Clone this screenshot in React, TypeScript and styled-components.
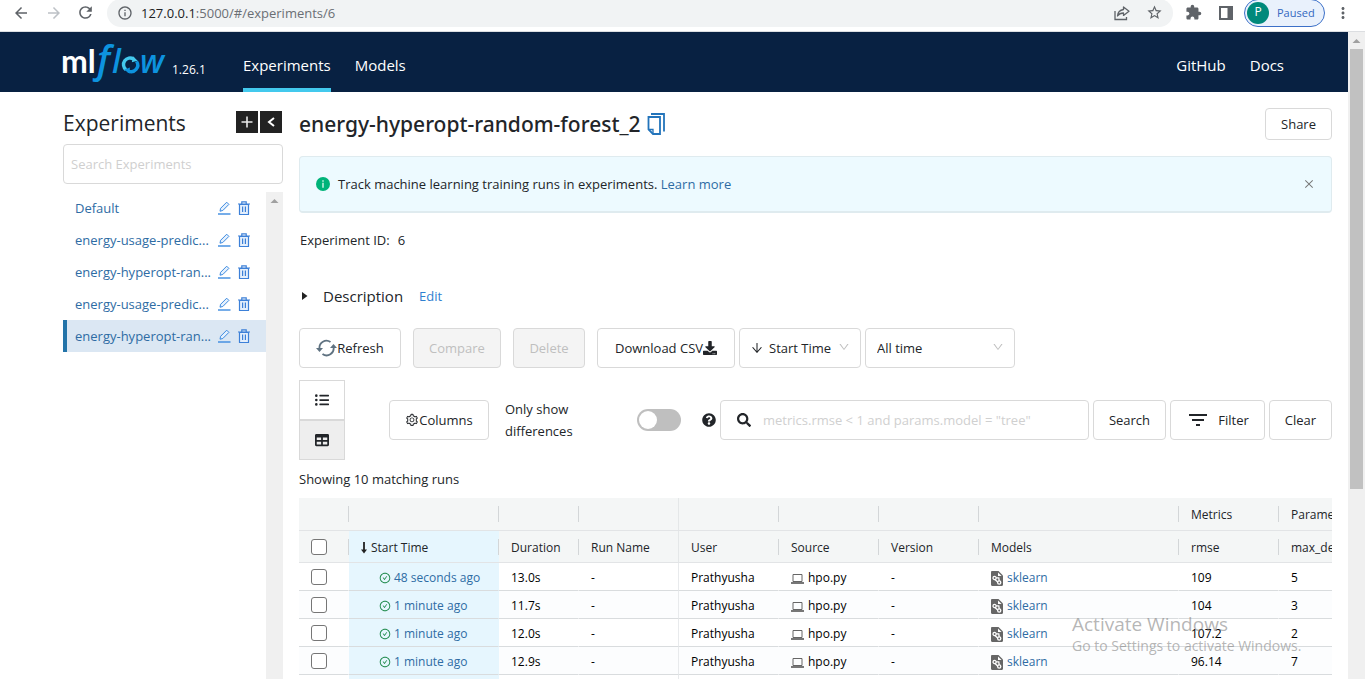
import React from "react";
import styled, { createGlobalStyle, css } from "styled-components";
import {
  MdArrowBack,
  MdArrowForward,
  MdRefresh,
  MdInfoOutline,
  MdStarBorder,
  MdExtension,
  MdMoreVert,
  MdFilterList,
} from "react-icons/md";
import {
  FaDownload,
  FaListUl,
  FaTable,
  FaSearch,
  FaQuestionCircle,
} from "react-icons/fa";
import {
  AiOutlineSetting,
  AiOutlineArrowDown,
  AiOutlineDown,
  AiOutlineClose,
  AiOutlineCheckCircle,
} from "react-icons/ai";

const color = {
  navy: "#082142",
  cyan: "#43c9ed",
  link: "#2e6ca4",
  action: "#2f80d0",
  text: "#222529",
  border: "#d9d9d9",
  muted: "#bfbfbf",
  head: "#f4f6f6",
};

const GlobalStyle = createGlobalStyle`
  *, *::before, *::after { box-sizing: border-box; }
  body { margin: 0; background: #fff; }
  body, button, input, select {
    font-family: "Open Sans", "Noto Sans", sans-serif;
    font-size: 13px;
    line-height: 22px;
    color: ${color.text};
  }
  a { text-decoration: none; color: ${color.link}; }
  h1, h2 { margin: 0; }
  svg { display: block; flex: none; }
`;

const Window = styled.div`
  display: flex;
  flex-direction: column;
  height: 100vh;
  overflow: hidden;
  position: relative;
`;

/* Browser chrome */

const BrowserBar = styled.header`
  display: flex;
  align-items: center;
  flex: none;
  height: 32px;
  padding: 0 13px 6px 12px;
  overflow: hidden;
  border-bottom: 1px solid #dcdee1;
  color: #5f6368;
`;

const BarButton = styled.button<{ $dim?: boolean; $gap: number }>`
  display: flex;
  padding: 0;
  border: 0;
  background: none;
  color: ${(p) => (p.$dim ? "#bdc1c6" : "#5f6368")};
  margin-right: ${(p) => p.$gap}px;
`;

const AddressBar = styled.div`
  display: flex;
  align-items: center;
  flex: 1;
  height: 28px;
  padding: 0 8px 0 10px;
  margin-right: 12px;
  border-radius: 14px;
  background: #f1f3f4;
`;

const Address = styled.span`
  flex: 1;
  margin-left: 8px;
  font-size: 13px;
  color: #6b6f74;
  b {
    font-weight: 400;
    color: #202124;
  }
`;

const Profile = styled.button`
  display: flex;
  align-items: center;
  flex: none;
  gap: 8px;
  width: 81px;
  height: 28px;
  padding: 0 2px;
  margin-right: 9px;
  border: 1px solid #3c70c8;
  border-radius: 14px;
  background: #e9f1fc;
  color: #3367c0;
  font-size: 11px;
`;

const Avatar = styled.span`
  width: 22px;
  height: 22px;
  border-radius: 50%;
  background: #00897b;
  color: #fff;
  font-size: 12px;
  line-height: 20px;
  text-align: center;
`;

/* Scroll bars */

const Rail = styled.div`
  flex: none;
  width: 17px;
  background: #f0f0f0;
  display: flex;
  flex-direction: column;
  align-items: center;
`;

const RailArrow = styled.svg`
  width: 17px;
  height: 17px;
  fill: #a0a0a0;
`;

const Thumb = styled.div`
  width: 13px;
  height: 68%;
  background: #c1c1c1;
`;

/* Page */

const Viewport = styled.div`
  display: flex;
  flex: 1;
  min-height: 0;
`;

const Page = styled.div`
  display: flex;
  flex-direction: column;
  flex: 1;
  min-width: 0;
`;

const NavBar = styled.nav`
  display: flex;
  flex: none;
  height: 60px;
  padding: 0 64px 0 61px;
  background: ${color.navy};
  color: #fff;
`;

const Version = styled.span`
  width: 31px;
  margin: 28px 40px 0 4px;
  font-size: 12px;
  line-height: 20px;
  white-space: nowrap;
`;

const NavLink = styled.a<{ $active?: boolean }>`
  display: flex;
  align-items: center;
  height: 60px;
  padding-top: 10px;
  margin-right: 24px;
  font-size: 15px;
  color: #fff;
  border-bottom: 4px solid ${(p) => (p.$active ? color.cyan : "transparent")};
  &:last-child {
    margin-right: 0;
  }
`;

const Spacer = styled.div`
  flex: 1;
`;

const Body = styled.div`
  display: flex;
  flex: 1;
  min-height: 0;
  padding: 0 16px 0 63px;
`;

const Sidebar = styled.aside`
  display: flex;
  flex-direction: column;
  flex: none;
  width: 220px;
  margin-right: 16px;
  padding-top: 16px;
`;

const SideHead = styled.div`
  display: flex;
  align-items: center;
  gap: 2px;
  height: 30px;
  margin: 0 1px 6px 0;
`;

const SideTitle = styled.h2`
  flex: 1;
  font-size: 21px;
  font-weight: 500;
  line-height: 30px;
`;

const SquareButton = styled.button`
  display: flex;
  align-items: center;
  justify-content: center;
  width: 22px;
  height: 22px;
  margin-bottom: 2px;
  padding: 0;
  border: 0;
  background: #222;
`;

const SideSearch = styled.input`
  width: 100%;
  height: 40px;
  padding: 0 7px;
  border: 1px solid ${color.border};
  border-radius: 4px;
  &::placeholder {
    color: #cfcfcf;
  }
`;

const SideListArea = styled.div`
  display: flex;
  flex: 1;
  min-height: 0;
  margin-top: 8px;
`;

const SideList = styled.ul`
  flex: 1;
  min-width: 0;
  margin: 0;
  padding: 0;
  list-style: none;
`;

const SideItem = styled.li<{ $active?: boolean }>`
  display: flex;
  align-items: center;
  height: 32px;
  padding: 0 15px 0 8px;
  border-left: 4px solid ${(p) => (p.$active ? "#2374a9" : "transparent")};
  background: ${(p) => (p.$active ? "#dbe7f3" : "transparent")};
`;

const SideName = styled.a`
  flex: 1;
  white-space: nowrap;
`;

const IconButton = styled.button`
  display: flex;
  flex: none;
  padding: 0;
  margin-left: 6px;
  border: 0;
  background: none;
  color: ${color.text};
`;

const Main = styled.main`
  flex: 1;
  min-width: 0;
  padding-top: 16px;
`;

const TitleRow = styled.div`
  display: flex;
  align-items: center;
  height: 32px;
  margin-bottom: 16px;
`;

const Title = styled.h1`
  font-family: "Noto Sans", "Open Sans", sans-serif;
  font-size: 21px;
  font-weight: 500;
  line-height: 32px;
  white-space: nowrap;
`;

const Button = styled.button<{ $width?: number; $small?: boolean }>`
  display: flex;
  align-items: center;
  justify-content: center;
  flex: none;
  width: ${(p) => p.$width}px;
  height: ${(p) => (p.$small ? 32 : 40)}px;
  padding: 0;
  border: 1px solid ${color.border};
  border-radius: 4px;
  background: #fff;
  white-space: nowrap;
  &:disabled {
    background: #f4f4f4;
    color: ${color.muted};
  }
`;

const Alert = styled.div`
  display: flex;
  align-items: center;
  gap: 8px;
  height: 57px;
  padding: 0 16px;
  border: 1px solid #dfebef;
  border-bottom-width: 2px;
  border-radius: 4px;
  background: #edfaff;
`;

const AlertText = styled.span`
  flex: 1;
`;

const Details = styled.div`
  display: flex;
  gap: 8px;
  height: 22px;
  margin: 16px 0 0 1px;
`;

const DescriptionRow = styled.div`
  display: flex;
  align-items: center;
  height: 24px;
  margin: 33px 0 20px 2px;
  a {
    margin-left: 16px;
    color: ${color.action};
  }
`;

const DescriptionTitle = styled.span`
  margin-left: 14px;
  font-size: 15px;
`;

const Toolbar = styled.div`
  display: flex;
  align-items: center;
  margin-bottom: 12px;
`;

const FilterBar = styled(Toolbar)`
  margin-bottom: 8px;
`;

const ActionGroup = styled.div`
  display: flex;
  gap: 12px;
  margin-right: 4px;
`;

const SelectBox = styled.label<{ $width: number }>`
  position: relative;
  display: flex;
  width: ${(p) => p.$width}px;
  margin-right: 4px;
`;

const Select = styled.select<{ $indent: number }>`
  appearance: none;
  width: 100%;
  height: 40px;
  padding: 0 24px 0 ${(p) => p.$indent}px;
  border: 1px solid ${color.border};
  border-radius: 4px;
  background: #fff;
`;

const SelectIcon = styled.span<{ $left?: boolean }>`
  position: absolute;
  top: 13px;
  ${(p) => (p.$left ? css`left: 11px; color: ${color.text};` : css`right: 11px; color: ${color.muted};`)}
  pointer-events: none;
`;

const ViewSwitch = styled.div`
  display: flex;
  flex-direction: column;
  margin-right: 44px;
`;

const ViewButton = styled.button<{ $active?: boolean }>`
  display: flex;
  align-items: center;
  justify-content: center;
  width: 46px;
  height: 40px;
  padding: 0;
  border: 1px solid ${color.border};
  background: ${(p) => (p.$active ? "#eeeeee" : "#fff")};
`;

const DiffLabel = styled.label`
  flex: none;
  width: 148px;
  padding: 0 48px 0 16px;
`;

const Switch = styled.input`
  appearance: none;
  flex: none;
  width: 44px;
  height: 22px;
  margin: 0 21px 0 0;
  padding: 2px;
  border-radius: 11px;
  background: #bfbfbf;
  &::before {
    content: "";
    display: block;
    width: 18px;
    height: 18px;
    border-radius: 50%;
    background: #fff;
  }
`;

const QueryBox = styled.label`
  display: flex;
  align-items: center;
  gap: 12px;
  flex: 1;
  min-width: 0;
  height: 40px;
  margin: 0 4px;
  padding: 0 16px;
  border: 1px solid ${color.border};
  border-radius: 4px;
`;

const QueryInput = styled.input`
  flex: 1;
  min-width: 0;
  padding: 0;
  border: 0;
  outline: 0;
  &::placeholder {
    color: #d0d0d0;
  }
`;

const ButtonGroup = styled.div`
  display: flex;
  gap: 4px;
`;

const Count = styled.p`
  margin: 0 0 8px;
`;

/* Runs table */

const TableFrame = styled.div`
  overflow: hidden;
`;

const Table = styled.table`
  width: 1080px;
  min-width: 100%;
  table-layout: fixed;
  border-collapse: separate;
  border-spacing: 0;
  font-size: 12px;
  line-height: 18px;
  color: #000;
`;

const HeadCell = styled.th<{ $sorted?: boolean; $edge?: boolean }>`
  height: 32px;
  padding: 2px 12px 0;
  border-bottom: 1px solid #e2e4e6;
  text-align: left;
  font-size: 12px;
  font-weight: 500;
  white-space: nowrap;
  color: ${color.text};
  background: ${(p) =>
      p.$edge
        ? "linear-gradient(#e4e7e8, #e4e7e8) no-repeat right center / 1px 100%"
        : "linear-gradient(#d3d6d8, #d3d6d8) no-repeat right center / 1px 16px"}
    ${(p) => (p.$sorted ? "#e6f6fe" : color.head)};
`;

const GroupRow = styled.tr`
  th {
    height: 33px;
  }
`;

const Cell = styled.td<{ $sorted?: boolean; $edge?: boolean }>`
  height: 28px;
  padding: 2px 12px 0;
  border-bottom: 1px solid #d9dcde;
  border-right: 1px solid ${(p) => (p.$edge ? "#e8eaec" : "transparent")};
  white-space: nowrap;
  ${(p) =>
    p.$sorted &&
    css`
      background: #e6f6fe;
      border-right-color: #e6f6fe;
      padding-left: 30px;
    `}
`;

const Row = styled.tr`
  &:nth-child(even) {
    background: #fcfdfe;
  }
`;

const Inline = styled.span<{ $gap: number }>`
  display: flex;
  align-items: center;
  gap: ${(p) => p.$gap}px;
`;

const Tick = styled.input`
  appearance: none;
  display: block;
  width: 16px;
  height: 16px;
  margin: 0 0 2px;
  border: 1px solid #767676;
  border-radius: 3px;
  background: #fff;
`;

/* System notice laid over the page */

const Watermark = styled.div`
  position: absolute;
  right: 57px;
  bottom: 23px;
  width: 236px;
  color: rgba(120, 120, 120, 0.55);
  pointer-events: none;
  white-space: nowrap;
`;

const WatermarkTitle = styled.div`
  font-size: 19px;
  line-height: 24px;
`;

const WatermarkText = styled.div`
  font-size: 14px;
  line-height: 20px;
`;

function Logo() {
  return (
    <svg width="107" height="60" viewBox="-2 0 107 60" role="img" aria-label="mlflow">
      <text x="-2" y="41" fill="#fff" fontFamily="Lato" fontWeight="700" fontSize="32">ml</text>
      <g fill="#0d93df" fontFamily="Open Sans" fontStyle="italic" fontWeight="600">
        <text x="34" y="41" fontSize="38">f</text>
        <text x="49" y="41" fontSize="32">l</text>
        <text x="77" y="41" fontSize="32">w</text>
      </g>
      <g fill="none" strokeWidth="3.4">
        <path d="M63 37.600A6.500 6.500 0 0 1 70.500 27" stroke="#43c9ed" />
        <path d="M73.500 29.400A6.500 6.500 0 0 1 65.200 38.900" stroke="#0d93df" />
      </g>
      <path d="M70 24.200l4.600 4.600-5.800 1.400z" fill="#43c9ed" />
      <path d="M66.500 41.600l-5.400-3.800 5.800-2.200z" fill="#0d93df" />
    </svg>
  );
}

function ShareIcon() {
  return (
    <svg width="16" height="16" viewBox="0 0 16 16" fill="none" stroke="#5f6368" strokeWidth="1.3">
      <path d="M1 6v8.500h11.500V12" />
      <path d="M9.500 2l5.500 4.200-5.500 4.200V8C6.500 8 4.800 9 3.500 11c.3-3.500 2.500-6 6-6.500z" strokeLinejoin="round" />
    </svg>
  );
}

function PanelIcon() {
  return (
    <svg width="14" height="14" viewBox="0 0 14 14" fill="#5f6368">
      <path fillRule="evenodd" d="M0 0h14v14H0zM2 2v10h6.500V2z" />
    </svg>
  );
}

function PencilIcon() {
  return (
    <svg width="14" height="14" viewBox="0 0 14 14" fill="none" stroke="#3c8ae0">
      <path d="M3 10.200l.6-2.900L9.700 1.200l2.200 2.200-6.100 6.100z" fill="#e4f0fd" strokeLinejoin="round" />
      <path d="M1 13h12.500" strokeWidth="1.400" />
    </svg>
  );
}

function TrashIcon() {
  return (
    <svg width="14" height="14" viewBox="0 0 14 14" fill="none" stroke="#3c80d8" strokeWidth="1.200">
      <path d="M2.500 3.500h9v10h-9z" fill="#e4effc" strokeLinejoin="round" />
      <path d="M1 3h12M4.800 2.800V.8h4.400v2M5.600 5.500v5.500M8.400 5.500v5.500" />
    </svg>
  );
}

function CopyIcon() {
  return (
    <svg width="18" height="22" viewBox="0 0 18 22" fill="none" stroke="#2374bb" strokeWidth="1.800">
      <path d="M1.500 4h11.500v17H6l-4.500-4.500z" />
      <path d="M1.500 16.500H6V21" strokeWidth="1.300" />
      <path d="M4 1h13v17.500" />
    </svg>
  );
}

function InfoIcon() {
  return (
    <svg width="14" height="14" viewBox="0 0 14 14">
      <circle cx="7" cy="7" r="7" fill="#00b379" />
      <path d="M6.300 3.200h1.400v1.500H6.300zM6.300 5.800h1.400v5H6.300z" fill="#d8f5ea" />
    </svg>
  );
}

function RefreshIcon() {
  return (
    <svg width="21" height="18" viewBox="0 0 21 18" fill="none" stroke="#5f7281" strokeWidth="1.800">
      <path d="M3.500 9.500A7 7 0 0 1 14.500 3" />
      <path d="M17.500 8A7 7 0 0 1 6.500 15" />
      <path d="M0 9h7l-3.500 4zM14 9h7l-3.500-4z" fill="#5f7281" stroke="none" />
    </svg>
  );
}

function SortIcon() {
  return (
    <svg width="6" height="12" viewBox="0 0 6 12" fill="#222">
      <path d="M2.100 0h1.800v7.500H6L3 11.500 0 7.500h2.100z" />
    </svg>
  );
}

function LaptopIcon() {
  return (
    <svg width="13" height="14" viewBox="0 0 13 14">
      <path d="M2 3.500h9v7H2z" fill="none" stroke="#666" />
      <path d="M0 11h13v1.400c0 .4-.2.600-.6.600H.6c-.4 0-.6-.2-.6-.6z" fill="#777" />
    </svg>
  );
}

function ModelIcon() {
  return (
    <svg width="12" height="17" viewBox="0 0 12 17">
      <path d="M1.200 2H7.500L12 6.500v9.300c0 .7-.5 1.200-1.200 1.200H1.200C.5 17 0 16.500 0 15.800V3.200C0 2.500.500 2 1.200 2z" fill="#666" />
      <path d="M7 3.500l3.600 3.600H7z" fill="#fff" />
      <g fill="none" stroke="#fff" strokeWidth="1.300">
        <circle cx="3.600" cy="9" r="1.600" />
        <circle cx="8.200" cy="13.500" r="1.600" />
        <path d="M5.200 8.800h2.600l.4 3M4 10.600l2.600 2.400" />
      </g>
    </svg>
  );
}

const experiments = [
  "Default",
  "energy-usage-predic...",
  "energy-hyperopt-ran...",
  "energy-usage-predic...",
  "energy-hyperopt-ran...",
];

const columnWidths = [50, 150, 80, 100, 100, 100, 100, 200, 100, 100];

const runs = [
  { start: "48 seconds ago", duration: "13.0s", rmse: "109", depth: "5" },
  { start: "1 minute ago", duration: "11.7s", rmse: "104", depth: "3" },
  { start: "1 minute ago", duration: "12.0s", rmse: "107.2", depth: "2" },
  { start: "1 minute ago", duration: "12.9s", rmse: "96.14", depth: "7" },
];

function Browser() {
  return (
    <BrowserBar>
      <BarButton aria-label="Back" $gap={15}><MdArrowBack size={18} /></BarButton>
      <BarButton aria-label="Forward" $dim $gap={13}><MdArrowForward size={18} /></BarButton>
      <BarButton aria-label="Reload" $gap={12}><MdRefresh size={19} /></BarButton>
      <AddressBar>
        <MdInfoOutline size={16} />
        <Address><b>127.0.0.1</b>:5000/#/experiments/6</Address>
        <BarButton aria-label="Share page" $gap={16}><ShareIcon /></BarButton>
        <BarButton aria-label="Bookmark" $gap={2}><MdStarBorder size={17} /></BarButton>
      </AddressBar>
      <BarButton aria-label="Extensions" $gap={17}><MdExtension size={17} /></BarButton>
      <BarButton aria-label="Side panel" $gap={11}><PanelIcon /></BarButton>
      <Profile><Avatar>P</Avatar>Paused</Profile>
      <BarButton aria-label="Menu" $gap={0}><MdMoreVert size={18} /></BarButton>
    </BrowserBar>
  );
}

function ExperimentSidebar() {
  return (
    <Sidebar>
      <SideHead>
        <SideTitle>Experiments</SideTitle>
        <SquareButton aria-label="New experiment">
          <svg width="12" height="12" viewBox="0 0 12 12" stroke="#e8e8e8" strokeWidth="1.600"><path d="M6 .5v11M.5 6h11" /></svg>
        </SquareButton>
        <SquareButton aria-label="Collapse list">
          <svg width="8" height="10" viewBox="0 0 8 10" fill="none" stroke="#fff" strokeWidth="2"><path d="M7 1L2 5l5 4" /></svg>
        </SquareButton>
      </SideHead>
      <SideSearch aria-label="Search Experiments" placeholder="Search Experiments" />
      <SideListArea>
        <SideList>
          {experiments.map((name, i) => (
            <SideItem key={i} $active={i === 4}>
              <SideName href="#">{name}</SideName>
              <IconButton aria-label="Rename"><PencilIcon /></IconButton>
              <IconButton aria-label="Delete"><TrashIcon /></IconButton>
            </SideItem>
          ))}
        </SideList>
        <Rail>
          <RailArrow viewBox="0 0 17 17"><path d="M4.500 11l4-4 4 4z" /></RailArrow>
        </Rail>
      </SideListArea>
    </Sidebar>
  );
}

function RunsTable() {
  return (
    <TableFrame>
      <Table>
        <colgroup>
          {columnWidths.map((w, i) => <col key={i} width={w} />)}
        </colgroup>
        <thead>
          <GroupRow>
            {["", "", "", "", "", "", "", "", "Metrics", "Parameters"].map((label, i) => (
              <HeadCell key={i} $edge={i === 3}>{label}</HeadCell>
            ))}
          </GroupRow>
          <tr>
            <HeadCell><Tick type="checkbox" aria-label="Select all runs" /></HeadCell>
            <HeadCell $sorted><Inline $gap={4}><SortIcon />Start Time</Inline></HeadCell>
            <HeadCell>Duration</HeadCell>
            <HeadCell $edge>Run Name</HeadCell>
            <HeadCell>User</HeadCell>
            <HeadCell>Source</HeadCell>
            <HeadCell>Version</HeadCell>
            <HeadCell>Models</HeadCell>
            <HeadCell>rmse</HeadCell>
            <HeadCell>max_depth</HeadCell>
          </tr>
        </thead>
        <tbody>
          {runs.map((run, i) => (
            <Row key={i}>
              <Cell><Tick type="checkbox" aria-label={`Select run ${i + 1}`} /></Cell>
              <Cell $sorted>
                <Inline $gap={3}><AiOutlineCheckCircle size={12} color="#1f8a4c" /><a href="#">{run.start}</a></Inline>
              </Cell>
              <Cell>{run.duration}</Cell>
              <Cell $edge>-</Cell>
              <Cell>Prathyusha</Cell>
              <Cell><Inline $gap={4}><LaptopIcon />hpo.py</Inline></Cell>
              <Cell>-</Cell>
              <Cell><Inline $gap={4}><ModelIcon /><a href="#">sklearn</a></Inline></Cell>
              <Cell>{run.rmse}</Cell>
              <Cell>{run.depth}</Cell>
            </Row>
          ))}
          <Row aria-hidden="true">
            {columnWidths.map((_, i) => <Cell key={i} $sorted={i === 1} $edge={i === 3} />)}
          </Row>
        </tbody>
      </Table>
    </TableFrame>
  );
}

function ExperimentView() {
  return (
    <Main>
      <TitleRow>
        <Title>energy-hyperopt-random-forest_2</Title>
        <IconButton aria-label="Copy name"><CopyIcon /></IconButton>
        <Spacer />
        <Button $width={67} $small>Share</Button>
      </TitleRow>
      <Alert>
        <InfoIcon />
        <AlertText>Track machine learning training runs in experiments. <a href="#">Learn more</a></AlertText>
        <IconButton aria-label="Dismiss"><AiOutlineClose size={12} color="#777" /></IconButton>
      </Alert>
      <Details><span>Experiment ID:</span><span>6</span></Details>
      <DescriptionRow>
        <svg width="8" height="10" viewBox="0 0 8 10" fill="#222"><path d="M1 1l5.500 4L1 9z" /></svg>
        <DescriptionTitle>Description</DescriptionTitle>
        <a href="#">Edit</a>
      </DescriptionRow>
      <Toolbar>
        <ActionGroup>
          <Button $width={102}><RefreshIcon />Refresh</Button>
          <Button $width={88} disabled>Compare</Button>
          <Button $width={72} disabled>Delete</Button>
          <Button $width={138}>Download CSV<FaDownload size={14} /></Button>
        </ActionGroup>
        <SelectBox $width={122}>
          <SelectIcon $left><AiOutlineArrowDown size={14} /></SelectIcon>
          <Select aria-label="Sort by" $indent={29}><option>Start Time</option></Select>
          <SelectIcon><AiOutlineDown size={12} /></SelectIcon>
        </SelectBox>
        <SelectBox $width={150}>
          <Select aria-label="Time range" $indent={11}><option>All time</option></Select>
          <SelectIcon><AiOutlineDown size={12} /></SelectIcon>
        </SelectBox>
      </Toolbar>
      <FilterBar>
        <ViewSwitch>
          <ViewButton aria-label="List view"><FaListUl size={14} /></ViewButton>
          <ViewButton aria-label="Grid view" $active><FaTable size={14} /></ViewButton>
        </ViewSwitch>
        <Button $width={100}><AiOutlineSetting size={14} />Columns</Button>
        <DiffLabel htmlFor="diff">Only show differences</DiffLabel>
        <Switch id="diff" type="checkbox" role="switch" />
        <FaQuestionCircle size={14} />
        <QueryBox>
          <FaSearch size={14} />
          <QueryInput aria-label="Search runs" placeholder={'metrics.rmse < 1 and params.model = "tree"'} />
        </QueryBox>
        <ButtonGroup>
          <Button $width={73}>Search</Button>
          <Button $width={95}><Inline $gap={8}><MdFilterList size={24} />Filter</Inline></Button>
          <Button $width={63}>Clear</Button>
        </ButtonGroup>
      </FilterBar>
      <Count>Showing 10 matching runs</Count>
      <RunsTable />
    </Main>
  );
}

export default function App() {
  return (
    <Window>
      <GlobalStyle />
      <Browser />
      <Viewport>
        <Page>
          <NavBar>
            <Logo />
            <Version>1.26.1</Version>
            <NavLink href="#" $active>Experiments</NavLink>
            <NavLink href="#">Models</NavLink>
            <Spacer />
            <NavLink href="#">GitHub</NavLink>
            <NavLink href="#">Docs</NavLink>
          </NavBar>
          <Body>
            <ExperimentSidebar />
            <ExperimentView />
          </Body>
        </Page>
        <Rail>
          <RailArrow viewBox="0 0 17 17"><path d="M4.500 11l4-4 4 4z" /></RailArrow>
          <Thumb />
        </Rail>
      </Viewport>
      <Watermark>
        <WatermarkTitle>Activate Windows</WatermarkTitle>
        <WatermarkText>Go to Settings to activate Windows.</WatermarkText>
      </Watermark>
    </Window>
  );
}
